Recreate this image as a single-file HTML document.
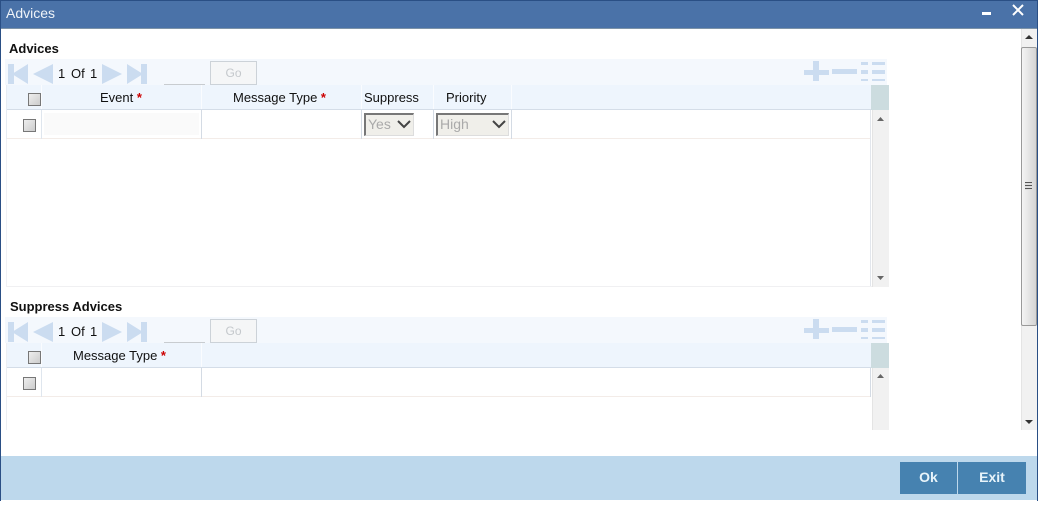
<!DOCTYPE html>
<html><head><meta charset="utf-8"><style>
html,body{margin:0;padding:0;background:#fff}
body{width:1038px;height:508px;position:relative;overflow:hidden;font-family:"Liberation Sans",sans-serif;font-size:13px;color:#111}
.a{position:absolute}
.t{position:absolute;white-space:nowrap;line-height:16px}
.r{color:#c00;font-weight:bold}
.cb{position:absolute;width:11px;height:11px;border:1px solid #777;background:linear-gradient(135deg,#eee,#ccc)}
.sel{position:absolute;box-sizing:border-box;height:23px;background:#f0efea;border-top:2px solid #777;border-left:2px solid #777;border-right:1px solid #ddd;border-bottom:1px solid #ddd;color:#aaa;font-size:14px;line-height:19px;padding-left:2px}
.go{position:absolute;z-index:2;box-sizing:border-box;width:47px;height:24px;border:1px solid #ccd2d8;background:#f5f6f7;color:#c4c8cc;font-size:12px;text-align:center;line-height:23px}
.sb{position:absolute;width:17px;background:#f1f1f1;border-left:1px solid #e4e4e4;box-sizing:border-box}
.btn{position:absolute;background:#4682b0;color:#e8f4fa;font-weight:bold;font-size:14px;text-align:center;height:32px;line-height:30px;top:462px}
</style></head><body>
<!-- window frame -->
<div class="a" style="left:0;top:0;width:1038px;height:1px;background:#2a4f85"></div>
<div class="a" style="left:0;top:1px;width:1038px;height:27px;background:#4a72a8"></div>
<div class="a" style="left:0;top:28px;width:1038px;height:1px;background:#7d93a8"></div>
<div class="a" style="left:0;top:0;width:1px;height:501px;background:#2a4f85"></div>
<div class="a" style="left:1037px;top:0;width:1px;height:501px;background:#2a4f85"></div>
<div class="t" style="left:6px;top:5px;color:#eef3f8;font-size:14px">Advices</div>
<div class="a" style="left:982px;top:12px;width:9px;height:3px;background:#fff"></div>
<svg class="a" style="left:1011px;top:3px" width="14" height="14"><path d="M2 2L12 12M12 2L2 12" stroke="#fff" stroke-width="2" fill="none"/></svg>

<!-- footer -->
<div class="a" style="left:1px;top:456px;width:1036px;height:44px;background:#bdd8ec"></div>
<div class="btn" style="left:900px;width:57px">Ok</div>
<div class="btn" style="left:958px;width:68px">Exit</div>

<!-- main scrollbar -->
<div class="sb" style="left:1021px;top:29px;height:401px;width:16px"></div>
<svg class="a" style="left:1024px;top:34px" width="10" height="6"><path d="M1 5L5 1L9 5Z" fill="#333"/></svg>
<div class="a" style="left:1021px;top:47px;width:16px;height:279px;box-sizing:border-box;border:1px solid #999;border-radius:2px;background:linear-gradient(90deg,#f4f4f4,#d4d4d4)"></div>
<div class="a" style="left:1025px;top:182px;width:7px;height:8px;background:repeating-linear-gradient(#555 0 1px,#ddd 1px 3px)"></div>
<svg class="a" style="left:1024px;top:419px" width="10" height="6"><path d="M1 1L5 5L9 1Z" fill="#333"/></svg>

<!-- Advices -->
<div class="t" style="left:9px;top:41px;font-weight:bold;font-size:13px">Advices</div>
<div class="a" style="left:5px;top:59px;width:882px;height:26px;background:#f4f8fd"></div>
<svg class="a" style="left:8px;top:63px" width="140" height="22" fill="#cbdcf0"><path d="M0 1H6V21H0ZM4 11L20 1V21ZM25 11L45 1V21ZM94 1L114 11L94 21ZM119 1L135 11L119 21ZM133 1H139V21H133Z"/></svg>
<div class="t" style="left:58px;top:66px">1</div><div class="t" style="left:71px;top:66px">Of</div><div class="t" style="left:90px;top:66px">1</div>
<div class="a" style="left:164px;top:84px;width:41px;height:1px;background:#c8ccd0"></div>
<div class="go" style="left:210px;top:61px">Go</div>
<svg class="a" style="left:804px;top:61px" width="82" height="21" fill="#cbdcf0"><path d="M0 9H9V0H15V9H25V14H15V20H9V14H0ZM28 8H53V13H28ZM57 1H64V4H57ZM57 9H64V13H57ZM57 18H64V20H57ZM68 1H81V4H68ZM68 9H81V13H68ZM68 18H81V20H68Z"/></svg>
<!-- header row -->
<div class="a" style="left:6px;top:85px;width:865px;height:24px;background:#eef5fd"></div>
<div class="a" style="left:6px;top:109px;width:865px;height:1px;background:#d4dde8"></div>
<div class="a" style="left:871px;top:85px;width:18px;height:25px;background:#ccdcdf"></div>
<div class="a" style="left:6px;top:138px;width:865px;height:1px;background:#f3ece8"></div>
<div class="a" style="left:41px;top:85px;width:1px;height:24px;background:#fafcff"></div><div class="a" style="left:41px;top:110px;width:1px;height:29px;background:#dfe6ee"></div>
<div class="a" style="left:201px;top:85px;width:1px;height:24px;background:#fafcff"></div><div class="a" style="left:201px;top:110px;width:1px;height:29px;background:#d4dbe4"></div>
<div class="a" style="left:361px;top:85px;width:1px;height:24px;background:#fafcff"></div><div class="a" style="left:361px;top:110px;width:1px;height:29px;background:#d4dbe4"></div>
<div class="a" style="left:433px;top:85px;width:1px;height:24px;background:#fafcff"></div><div class="a" style="left:433px;top:110px;width:1px;height:29px;background:#d4dbe4"></div>
<div class="a" style="left:511px;top:85px;width:1px;height:24px;background:#fafcff"></div><div class="a" style="left:511px;top:110px;width:1px;height:29px;background:#d4dbe4"></div>
<div class="a" style="left:870px;top:110px;width:1px;height:177px;background:#e2e6ec"></div>
<div class="a" style="left:6px;top:85px;width:1px;height:54px;background:#e6ebf2"></div>
<div class="cb" style="left:28px;top:93px"></div>
<div class="cb" style="left:23px;top:119px"></div>
<div class="t" style="left:100px;top:90px">Event <span class="r">*</span></div>
<div class="t" style="left:233px;top:90px">Message Type <span class="r">*</span></div>
<div class="t" style="left:364px;top:90px">Suppress</div>
<div class="t" style="left:446px;top:90px">Priority</div>
<div class="a" style="left:44px;top:113px;width:155px;height:22px;background:#fafafa"></div>
<div class="sel" style="left:364px;top:113px;width:50px">Yes<svg class="a" style="left:31px;top:5px" width="15" height="10"><path d="M1 1L7 7L13 1" stroke="#444" stroke-width="2" fill="none"/></svg></div>
<div class="sel" style="left:436px;top:113px;width:73px">High<svg class="a" style="left:54px;top:5px" width="15" height="10"><path d="M1 1L7 7L13 1" stroke="#444" stroke-width="2" fill="none"/></svg></div>
<div class="sb" style="left:872px;top:110px;height:177px"></div>
<svg class="a" style="left:876px;top:116px" width="9" height="6"><path d="M1 5L4.500 1L8 5Z" fill="#666"/></svg>
<svg class="a" style="left:876px;top:275px" width="9" height="6"><path d="M1 1L4.500 5L8 1Z" fill="#666"/></svg>
<div class="a" style="left:6px;top:286px;width:866px;height:1px;background:#f0f0f2"></div>
<div class="a" style="left:6px;top:139px;width:1px;height:148px;background:#f0f0f4"></div>

<!-- Suppress Advices -->
<div class="t" style="left:10px;top:299px;font-weight:bold;font-size:13px">Suppress Advices</div>
<div class="a" style="left:5px;top:317px;width:882px;height:26px;background:#f4f8fd"></div>
<svg class="a" style="left:8px;top:321px" width="140" height="22" fill="#cbdcf0"><path d="M0 1H6V21H0ZM4 11L20 1V21ZM25 11L45 1V21ZM94 1L114 11L94 21ZM119 1L135 11L119 21ZM133 1H139V21H133Z"/></svg>
<div class="t" style="left:58px;top:324px">1</div><div class="t" style="left:71px;top:324px">Of</div><div class="t" style="left:90px;top:324px">1</div>
<div class="a" style="left:164px;top:342px;width:41px;height:1px;background:#c8ccd0"></div>
<div class="go" style="left:210px;top:319px">Go</div>
<svg class="a" style="left:804px;top:319px" width="82" height="21" fill="#cbdcf0"><path d="M0 9H9V0H15V9H25V14H15V20H9V14H0ZM28 8H53V13H28ZM57 1H64V4H57ZM57 9H64V13H57ZM57 18H64V20H57ZM68 1H81V4H68ZM68 9H81V13H68ZM68 18H81V20H68Z"/></svg>
<div class="a" style="left:6px;top:343px;width:865px;height:24px;background:#eef5fd"></div>
<div class="a" style="left:6px;top:367px;width:865px;height:1px;background:#d4dde8"></div>
<div class="a" style="left:871px;top:343px;width:18px;height:25px;background:#ccdcdf"></div>
<div class="a" style="left:6px;top:396px;width:865px;height:1px;background:#f3ece8"></div>
<div class="a" style="left:41px;top:343px;width:1px;height:24px;background:#fafcff"></div><div class="a" style="left:41px;top:368px;width:1px;height:29px;background:#dfe6ee"></div>
<div class="a" style="left:201px;top:343px;width:1px;height:24px;background:#fafcff"></div><div class="a" style="left:201px;top:368px;width:1px;height:29px;background:#d4dbe4"></div>
<div class="a" style="left:6px;top:343px;width:1px;height:87px;background:#eceef2"></div>
<div class="a" style="left:870px;top:368px;width:1px;height:29px;background:#d4dbe4"></div>
<div class="cb" style="left:28px;top:351px"></div>
<div class="cb" style="left:23px;top:377px"></div>
<div class="t" style="left:73px;top:348px">Message Type <span class="r">*</span></div>
<div class="sb" style="left:872px;top:368px;height:62px"></div>
<svg class="a" style="left:876px;top:373px" width="9" height="6"><path d="M1 5L4.500 1L8 5Z" fill="#666"/></svg>
</body></html>
